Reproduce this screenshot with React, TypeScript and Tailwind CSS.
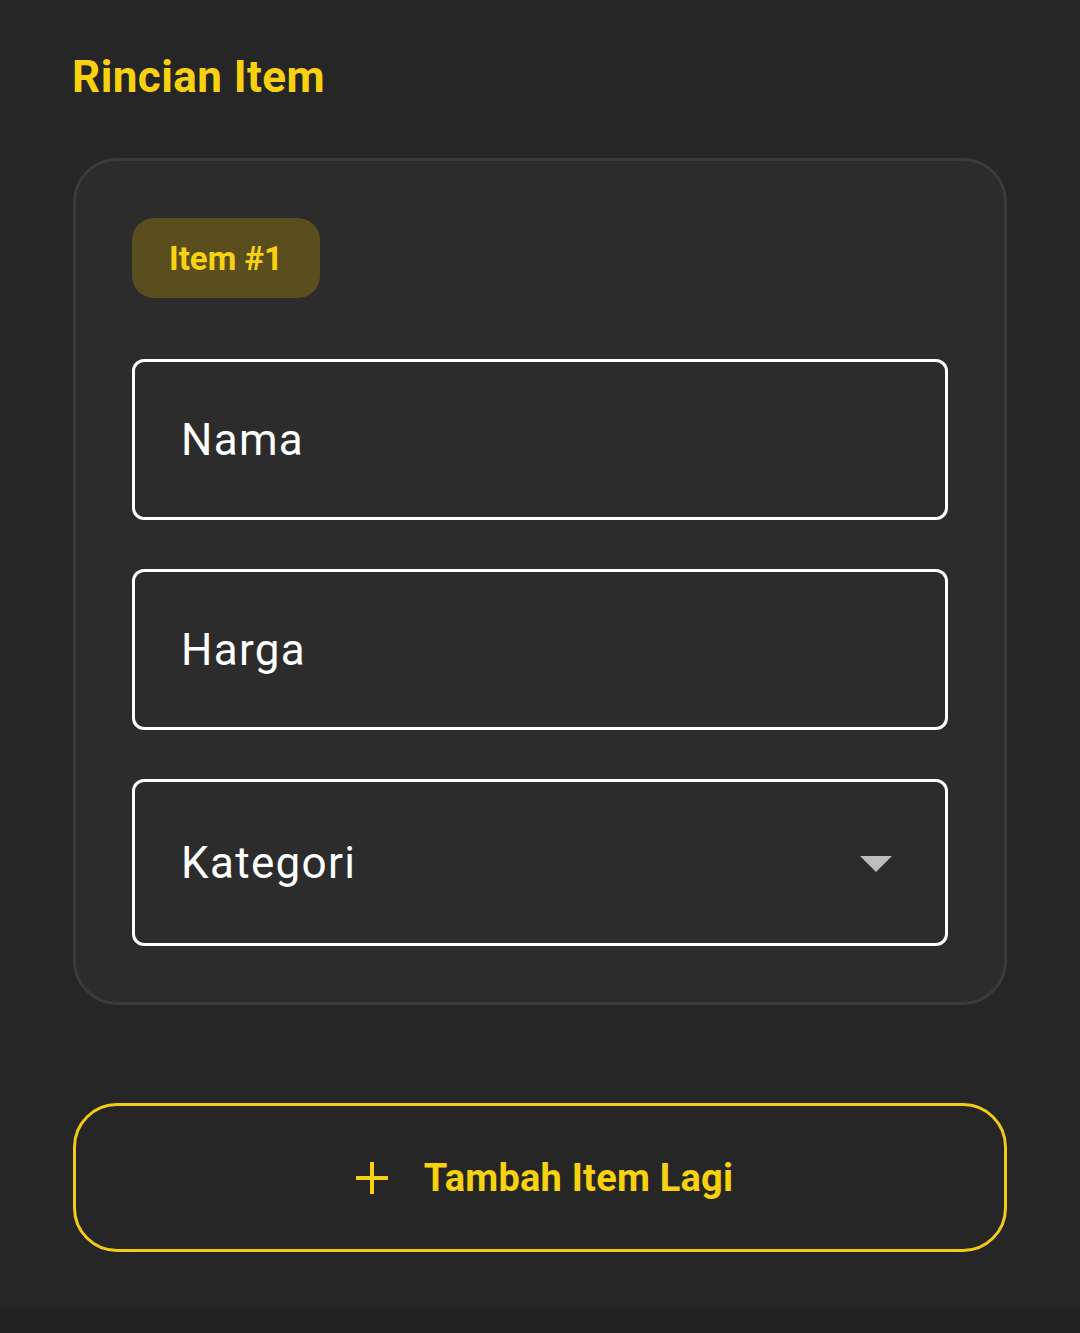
import React from "react";

const font = { fontFamily: "Roboto, 'Noto Sans', Arial, sans-serif" };

function Field({ label, dropdown, h }: { label: string; dropdown?: boolean; h: string }) {
  return (
    <div
      className={`flex items-center justify-between border-[3px] border-white rounded-[12px] pl-[46px] pr-[53px] ${h}`}
    >
      <span className="text-[44px] leading-none text-white tracking-[0.03em]">{label}</span>
      {dropdown && (
        <svg width="32" height="16" viewBox="0 0 32 16" className="mt-[2px]">
          <polygon points="0,0 32,0 16,16" fill="#bdbdbd" />
        </svg>
      )}
    </div>
  );
}

export default function App() {
  return (
    <div style={font} className="w-[1080px] min-h-[1333px] bg-[#222222]">
      <div className="bg-[#262626] px-[73px] pt-[51px] pb-[56px]">
        <h1 className="text-[44px] leading-[52px] font-bold text-[#f8d20f] tracking-[0.01em] -ml-[1px]">Rincian Item</h1>
        <div className="mt-[55px] rounded-[44px] border-[3px] border-[#3b3b3b] bg-[#2c2c2c] pl-[56px] pr-[56px] pt-[57px] pb-[56px]">
          <div className="flex h-[80px] w-[188px] items-center justify-center rounded-[22px] bg-[#5a4e1e]">
            <span className="text-[33px] font-bold text-[#f8d20f] leading-none">Item #1</span>
          </div>
          <div className="mt-[61px] flex flex-col gap-[49px]">
            <Field label="Nama" h="h-[161px]" />
            <Field label="Harga" h="h-[161px]" />
            <Field label="Kategori" dropdown h="h-[167px]" />
          </div>
        </div>
        <button className="mt-[98px] flex h-[149px] w-full items-center justify-center gap-[35px] rounded-[44px] border-[3px] border-[#f3cb16] pl-[8px]">
          <svg width="34" height="34" viewBox="0 0 34 34">
            <path d="M17 1 V33 M1 17 H33" stroke="#f8d20f" strokeWidth="4" fill="none" />
          </svg>
          <span className="text-[38px] font-bold text-[#f8d20f] leading-none tracking-[0.006em]">Tambah Item Lagi</span>
        </button>
      </div>
    </div>
  );
}
